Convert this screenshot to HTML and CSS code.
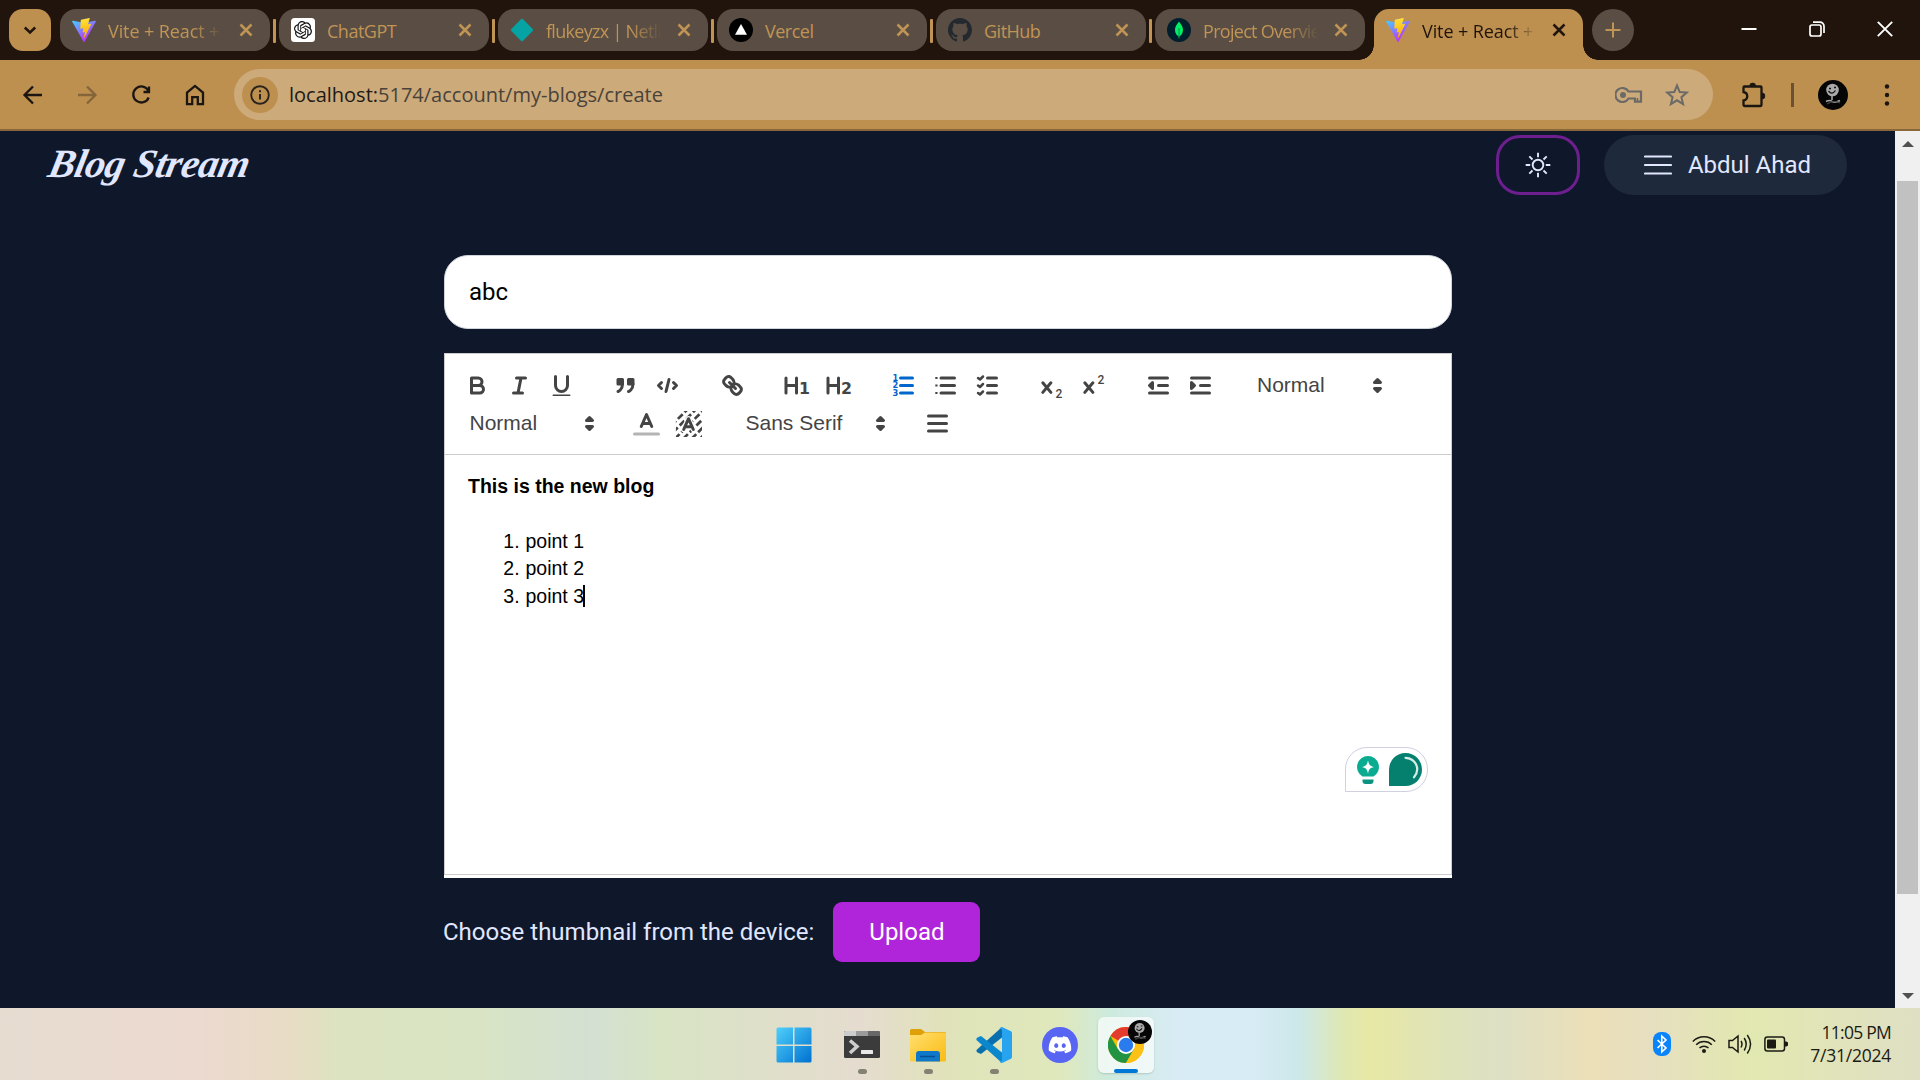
FILE: index.html
```
<!DOCTYPE html>
<html lang="en">
<head>
<meta charset="utf-8">
<title>Vite + React + TS</title>
<link rel="stylesheet" href="styles.css">
</head>
<body>
<svg class="defs" width="0" height="0" aria-hidden="true">
  <defs>
    <linearGradient id="viteA" x1="0" y1="0" x2="0.6" y2="0.9"><stop offset="0" stop-color="#41d1ff"/><stop offset="1" stop-color="#bd34fe"/></linearGradient>
    <linearGradient id="viteB" x1="0.4" y1="0" x2="0.5" y2="1"><stop offset="0" stop-color="#ffea83"/><stop offset="0.1" stop-color="#ffdd35"/><stop offset="1" stop-color="#ffa800"/></linearGradient>
    <linearGradient id="win" x1="0" y1="0" x2="1" y2="1"><stop offset="0" stop-color="#4fd0fb"/><stop offset="1" stop-color="#0070d0"/></linearGradient>
    <linearGradient id="folder" x1="0" y1="0" x2="1" y2="1"><stop offset="0" stop-color="#ffdf70"/><stop offset="1" stop-color="#fbbb12"/></linearGradient>
    <symbol id="vite" viewBox="0 0 256 257">
      <path fill="url(#viteA)" d="M255.153 37.938L134.897 252.976c-2.483 4.44-8.862 4.466-11.382.048L.875 37.958c-2.746-4.814 1.371-10.646 6.827-9.67l120.385 21.517a6.537 6.537 0 0 0 2.322-.004l117.867-21.483c5.438-.991 9.574 4.796 6.877 9.62Z"/>
      <path fill="url(#viteB)" d="M185.432.063L96.44 17.501a3.268 3.268 0 0 0-2.634 3.014l-5.474 92.456a3.268 3.268 0 0 0 3.997 3.378l24.777-5.718c2.318-.535 4.413 1.507 3.936 3.838l-7.361 36.047c-.495 2.426 1.782 4.5 4.151 3.78l15.304-4.649c2.372-.72 4.652 1.36 4.15 3.788l-11.698 56.621c-.732 3.542 3.979 5.473 5.943 2.437l1.313-2.028l72.516-144.72c1.215-2.423-.88-5.186-3.54-4.672l-25.505 4.922c-2.396.462-4.435-1.77-3.759-4.114l16.646-57.705c.677-2.35-1.37-4.583-3.769-4.113Z"/>
    </symbol>
    <symbol id="close" viewBox="0 0 24 24"><path d="M6.5 6.5l11 11M17.5 6.5l-11 11" fill="none" stroke="currentColor" stroke-width="2.5"/></symbol>
    <symbol id="avatar" viewBox="0 0 30 30">
      <circle cx="15" cy="15" r="15" fill="#050505"/>
      <circle cx="14.5" cy="10" r="6.3" fill="#a9a9a9"/>
      <path d="M11 8.5h2M16 7.5h2M10.5 11q3.5 4.5 7-.5" fill="none" stroke="#111" stroke-width="1.3"/>
      <path d="M14 16v4M8 21.500q4-2 6 0t8-1" fill="none" stroke="#a5a5a5" stroke-width="1.6"/>
      <path d="M9 24q6-4 13-1" fill="none" stroke="#444" stroke-width="1.3"/>
    </symbol>
    <symbol id="sort" viewBox="0 0 18 18"><path class="fs" d="M7 11l2 2 2-2zM7 7l2-2 2 2z"/></symbol>
  </defs>
</svg>

<header class="tabstrip">
  <button class="search-tabs"><svg width="16" height="16" viewBox="0 0 16 16"><path d="M2.8 5.5L8 10.5l5.2-5" fill="none" stroke="currentColor" stroke-width="2.5"/></svg></button>
  <div class="tab"><svg class="fav"><use href="#vite"/></svg><span class="tab-title fade wide">Vite + React + TS</span><svg class="x"><use href="#close"/></svg></div>
  <i class="sep"></i>
  <div class="tab"><svg class="fav" viewBox="0 0 24 24"><rect width="24" height="24" rx="3.5" fill="#fff"/><path transform="translate(3 3) scale(.75)" fill="#111" d="M22.2819 9.8211a5.9847 5.9847 0 0 0-.5157-4.9108 6.0462 6.0462 0 0 0-6.5098-2.9A6.0651 6.0651 0 0 0 4.9807 4.1818a5.9847 5.9847 0 0 0-3.9977 2.9 6.0462 6.0462 0 0 0 .7427 7.0966 5.98 5.98 0 0 0 .511 4.9107 6.051 6.051 0 0 0 6.5146 2.9001A5.9847 5.9847 0 0 0 13.2599 24a6.0557 6.0557 0 0 0 5.7718-4.2058 5.9894 5.9894 0 0 0 3.9977-2.9001 6.0557 6.0557 0 0 0-.7475-7.0729zm-9.022 12.6081a4.4755 4.4755 0 0 1-2.8764-1.0408l.1419-.0804 4.7783-2.7582a.7948.7948 0 0 0 .3927-.6813v-6.7369l2.02 1.1686a.071.071 0 0 1 .038.052v5.5826a4.504 4.504 0 0 1-4.4945 4.4944zm-9.6607-4.1254a4.4708 4.4708 0 0 1-.5346-3.0137l.142.0852 4.783 2.7582a.7712.7712 0 0 0 .7806 0l5.8428-3.3685v2.3324a.0804.0804 0 0 1-.0332.0615L9.74 19.9502a4.4992 4.4992 0 0 1-6.1408-1.6464zM2.3408 7.8956a4.485 4.485 0 0 1 2.3655-1.9728V11.6a.7664.7664 0 0 0 .3879.6765l5.8144 3.3543-2.0201 1.1685a.0757.0757 0 0 1-.071 0l-4.8303-2.7865A4.504 4.504 0 0 1 2.3408 7.872zm16.5963 3.8558L13.1038 8.364 15.1192 7.2a.0757.0757 0 0 1 .071 0l4.8303 2.7913a4.4944 4.4944 0 0 1-.6765 8.1042v-5.6772a.79.79 0 0 0-.407-.667zm2.0107-3.0231l-.142-.0852-4.7735-2.7818a.7759.7759 0 0 0-.7854 0L9.409 9.2297V6.8974a.0662.0662 0 0 1 .0284-.0615l4.8303-2.7866a4.4992 4.4992 0 0 1 6.6802 4.66zM8.3065 12.863l-2.02-1.1638a.0804.0804 0 0 1-.038-.0567V6.0742a4.4992 4.4992 0 0 1 7.3757-3.4537l-.142.0805L8.704 5.459a.7948.7948 0 0 0-.3927.6813zm1.0976-2.3654l2.602-1.4998 2.6069 1.4998v2.9994l-2.5974 1.4997-2.6067-1.4997Z"/></svg><span class="tab-title">ChatGPT</span><svg class="x"><use href="#close"/></svg></div>
  <i class="sep"></i>
  <div class="tab"><svg class="fav" viewBox="0 0 24 24"><rect x="3.7" y="3.7" width="16.6" height="16.6" rx="1.5" transform="rotate(45 12 12)" fill="#05a3a3"/></svg><span class="tab-title fade tight">flukeyzx | Netlify</span><svg class="x"><use href="#close"/></svg></div>
  <i class="sep"></i>
  <div class="tab"><svg class="fav" viewBox="0 0 24 24"><circle cx="12" cy="12" r="12"/><path d="M12 6l6 10.7H6z" fill="#fff"/></svg><span class="tab-title">Vercel</span><svg class="x"><use href="#close"/></svg></div>
  <i class="sep"></i>
  <div class="tab"><svg class="fav" viewBox="0 0 16 16"><path fill="#24292f" d="M8 0C3.58 0 0 3.58 0 8c0 3.54 2.29 6.53 5.47 7.59.4.07.55-.17.55-.38 0-.19-.01-.82-.01-1.49-2.01.37-2.53-.49-2.69-.94-.09-.23-.48-.94-.82-1.13-.28-.15-.68-.52-.01-.53.63-.01 1.08.58 1.23.82.72 1.21 1.87.87 2.33.66.07-.52.28-.87.51-1.07-1.78-.2-3.64-.89-3.64-3.95 0-.87.31-1.59.82-2.15-.08-.2-.36-1.02.08-2.12 0 0 .67-.21 2.2.82.64-.18 1.32-.27 2-.27s1.36.09 2 .27c1.53-1.04 2.2-.82 2.2-.82.44 1.1.16 1.92.08 2.12.51.56.82 1.27.82 2.15 0 3.07-1.87 3.75-3.65 3.95.29.25.54.73.54 1.48 0 1.07-.01 1.93-.01 2.2 0 .21.15.46.55.38A8.01 8.01 0 0 0 16 8c0-4.42-3.58-8-8-8z"/></svg><span class="tab-title">GitHub</span><svg class="x"><use href="#close"/></svg></div>
  <i class="sep"></i>
  <div class="tab"><svg class="fav" viewBox="0 0 24 24"><circle cx="12" cy="12" r="12" fill="#001e2b"/><path d="M12 3.5c.8 1.6 4 4 4 8.500 0 3.500-2 5.500-3.600 6.500l-.1 2h-.6l-.1-2C10 17.500 8 15.500 8 12c0-4.500 3.200-6.900 4-8.500z" fill="#00ed64"/><path d="M12 10v9" stroke="#00684a" stroke-width=".7"/></svg><span class="tab-title fade tight">Project Overview</span><svg class="x"><use href="#close"/></svg></div>
  <div class="tab active"><svg class="fav"><use href="#vite"/></svg><span class="tab-title fade wide">Vite + React + TS</span><svg class="x"><use href="#close"/></svg></div>
  <button class="new-tab"><svg width="16" height="16" viewBox="0 0 16 16"><path d="M8 .5v15M.5 8h15" stroke="currentColor" stroke-width="2"/></svg></button>
  <div class="win-controls">
    <svg width="16" height="16" viewBox="0 0 16 16"><path d="M.5 8h15" stroke-width="2"/></svg>
    <svg width="16" height="16" viewBox="0 0 16 16"><rect x="1" y="4" width="11" height="11" rx="2"/><path d="M4 1.200h7a4 4 0 0 1 4 4V12"/></svg>
    <svg width="16" height="16" viewBox="0 0 16 16"><path d="M.8.8l14.400 14.400M15.200.8L.8 15.200" stroke-width="1.900"/></svg>
  </div>
</header>

<nav class="toolbar">
  <div class="nav-buttons">
    <svg viewBox="0 0 24 24"><path d="M21 12H4M12 3.500L3.500 12l8.500 8.500"/></svg>
    <svg class="dim" viewBox="0 0 24 24"><path d="M3 12h17M12 3.500l8.500 8.500-8.500 8.500"/></svg>
    <svg viewBox="0 0 24 24"><path d="M19.500 8A8 8 0 1 0 19.700 14.500M20 3.500v5.500h-5.500"/></svg>
    <svg viewBox="0 0 24 24"><path d="M4 21.200V9.500l8-6.600 8 6.600v11.700h-5.200v-7H9.200v7z"/></svg>
  </div>
  <div class="omnibox">
    <span class="site-info"><svg width="20" height="20" viewBox="0 0 20 20"><circle cx="10" cy="10" r="8.800" fill="none" stroke="#2a241d" stroke-width="1.900"/><path d="M10 9v5.500M10 5.300v2" stroke="#2a241d" stroke-width="2"/></svg></span>
    <span class="url"><b>localhost:</b>5174/account/my-blogs/create</span>
    <svg class="key" width="28" height="18" viewBox="0 0 28 18"><path d="M13.500 5.500A7 7 0 1 0 13.500 12.500H20v3.200h6V5.500z" fill="none" stroke="#6b6a67" stroke-width="2.200"/><circle cx="8" cy="9" r="3" fill="#6b6a67"/><path d="M22.500 15v-3" stroke="#6b6a67" stroke-width="1.500"/></svg>
    <svg class="star" width="24" height="24" viewBox="0 0 24 24"><path d="M12 2.500l2.700 6.600 7.100.5-5.400 4.600 1.700 6.900-6.100-3.800-6.100 3.800 1.700-6.900-5.400-4.600 7.100-.5z" fill="none" stroke="#6b6a67" stroke-width="2"/></svg>
  </div>
  <svg class="ext" width="26" height="26" viewBox="0 0 26 26"><path d="M4.500 4.500h16a1 1 0 0 1 1 1V23a1 1 0 0 1-1 1h-16a1 1 0 0 1-1-1v-4.500c5-1 5-7.500 0-8.500V5.500a1 1 0 0 1 1-1z" fill="none" stroke="#1b1611" stroke-width="2.300"/><path d="M9.500 4a3.200 3.200 0 0 1 6.400 0zM22 10.800a3.200 3.200 0 0 1 0 6.400z" fill="#1b1611"/></svg>
  <i class="tb-divider"></i>
  <svg class="profile" width="30" height="30"><use href="#avatar"/></svg>
  <svg class="kebab" width="6" height="24" viewBox="0 0 6 24"><circle cx="3" cy="3.500" r="2.200"/><circle cx="3" cy="12" r="2.200"/><circle cx="3" cy="20.500" r="2.200"/></svg>
</nav>

<div class="viewport">
  <main class="page">
    <div class="site-head">
      <a class="logo">Blog Stream</a>
      <div class="head-actions">
        <button class="theme"><svg width="26" height="26" viewBox="0 0 26 26"><circle cx="13" cy="13" r="5.300"/><path d="M13 .7v4.500M13 20.800v4.500M.7 13h4.500M20.800 13h4.500M4.300 4.300l3.200 3.200M18.500 18.500l3.200 3.200M4.300 21.700l3.200-3.200M18.500 7.500l3.200-3.200"/></svg></button>
        <button class="user"><svg width="28" height="20" viewBox="0 0 28 20"><path d="M1 1.500h26M1 10h26M1 18.500h26" stroke="#e0e7ff" stroke-width="2.200" stroke-linecap="round"/></svg><span>Abdul Ahad</span></button>
      </div>
    </div>

    <form class="form">
      <div class="title-input">abc</div>
      <div class="editor">
        <div class="ql-toolbar">
          <span class="grp">
            <svg viewBox="0 0 18 18"><path d="M5,4H9.500A2.500,2.500,0,0,1,9.500,9H5ZM5,9h5.500a2.500,2.500,0,0,1,0,5H5Z"/></svg>
            <svg viewBox="0 0 18 18"><path d="M7 4h6M5 14h6M8 14L10 4"/></svg>
            <svg viewBox="0 0 18 18"><path d="M5,3V9a4,4,0,0,0,8,0V3"/><rect class="f" x="3" y="15" width="12" height="1" rx=".5"/></svg>
          </span>
          <span class="grp">
            <svg viewBox="0 0 18 18"><path class="fs" d="M4 5h3v3H4zM11 5h3v3h-3z"/><path d="M7,8c0,4.031-3,5-3,5M14,8c0,4.031-3,5-3,5"/></svg>
            <svg viewBox="0 0 18 18"><path d="M5 7L3 9l2 2M13 7l2 2-2 2M10 5L8 13"/></svg>
          </span>
          <span class="grp">
            <svg viewBox="0 0 18 18"><path d="M7 7l4 4M8.900,4.577a3.476,3.476,0,0,1,.36,4.679A3.476,3.476,0,0,1,4.577,8.900C3.185,7.500,2.035,6.400,4.217,4.217S7.500,3.185,8.900,4.577ZM13.423,9.100a3.476,3.476,0,0,0-4.679-.36,3.476,3.476,0,0,0,.36,4.679c1.392,1.392,2.500,2.542,4.679.36S14.815,10.500,13.423,9.100Z"/></svg>
          </span>
          <span class="grp">
            <svg viewBox="0 0 18 18"><path d="M2 4v10M9 4v10M2 9h7"/><text x="10.600" y="14.900" font-size="10.500">1</text></svg>
            <svg viewBox="0 0 18 18"><path d="M2 4v10M9 4v10M2 9h7"/><text x="10.700" y="14.900" font-size="10.500">2</text></svg>
          </span>
          <span class="grp">
            <svg class="on" viewBox="0 0 18 18"><path d="M7 4h8M7 9h8M7 14h8"/><text x="1.600" y="5.700" font-size="5.500">1</text><text x="1.600" y="10.900" font-size="5.500">2</text><text x="1.600" y="16" font-size="5.500">3</text></svg>
            <svg viewBox="0 0 18 18"><path d="M6 4h9M6 9h9M6 14h9"/><path class="f" d="M2.200 3.300h1.500v1.400H2.200zM2.200 8.300h1.500v1.400H2.200zM2.200 13.300h1.500v1.400H2.200z"/></svg>
            <svg viewBox="0 0 18 18"><path d="M9 4h6M9 9h6M9 14h6"/><path class="thin" d="M2.700 4l1.300 1L6 3M2.700 9l1.300 1L6 8M2.700 14l1.300 1L6 13"/></svg>
          </span>
          <span class="grp">
            <svg viewBox="0 0 18 18"><path d="M3.200 7.200l5.400 6.400M8.600 7.200L3.200 13.600"/><text class="reg" x="11.600" y="17" font-size="8">2</text></svg>
            <svg viewBox="0 0 18 18"><path d="M3.200 7.200l5.400 6.400M8.600 7.200L3.200 13.600"/><text class="reg" x="11.600" y="8.300" font-size="8">2</text></svg>
          </span>
          <span class="grp">
            <svg viewBox="0 0 18 18"><path d="M3 4h12M3 14h12M9 9h6"/><path class="fs" d="M5 7v4L3 9z"/></svg>
            <svg viewBox="0 0 18 18"><path d="M3 4h12M3 14h12M9 9h6"/><path class="fs" d="M3 7v4l2-2z"/></svg>
          </span>
          <span class="picker"><span>Normal</span><svg><use href="#sort"/></svg></span>
          <span class="picker"><span>Normal</span><svg><use href="#sort"/></svg></span>
          <span class="grp">
            <svg viewBox="0 0 18 18"><path opacity=".4" d="M1 16h16"/><path d="M5.500 11L9 3l3.500 8M11.600 9H6.400"/></svg>
            <svg class="hatched" viewBox="0 0 18 18"><svg x="2" y="2" width="14.500" height="14.500" viewBox="2 2 14.500 14.500" transform="translate(-1.800 -1.800) scale(1.200)"><path class="hatch" d="M6 1L1 6M8.500 1L1 8.500M11 1L1 11M13.500 1L1 13.500M16 1L1 16M18 1.500L1.500 18M18 4L4 18M18 6.500L6.500 18M18 9L9 18M18 11.500L11.500 18M18 14L14 18"/></svg><path class="halo" d="M5.800 13L9 5.800l3.200 7.200M11.400 11.200H6.600"/><path d="M5.800 13L9 5.800l3.200 7.200M11.400 11.200H6.600"/></svg>
          </span>
          <span class="picker font"><span>Sans Serif</span><svg><use href="#sort"/></svg></span>
          <span class="grp"><svg viewBox="0 0 18 18"><path d="M3 4h12M3 9h12M3 14h12"/></svg></span>
        </div>
        <div class="ql-body">
          <p><strong>This is the new blog</strong></p>
          <p><br></p>
          <ol><li>point 1</li><li>point 2</li><li>point 3<i class="caret"></i></li></ol>
          <div class="assist">
            <svg width="24" height="30" viewBox="0 0 24 30"><path d="M12 1a11 11 0 0 1 5.500 20.500H6.500A11 11 0 0 1 12 1z" fill="#0bab92"/><path d="M12 5.500c1 4.500 1.900 5.400 6 6.500-4.100 1-5 2-6 6.500-1-4.500-1.900-5.500-6-6.500 4.100-1.100 5-2 6-6.500z" fill="#fff"/><path d="M6.500 24.500h11V26a3 3 0 0 1-3 3h-5a3 3 0 0 1-3-3z" fill="#0a9480"/></svg>
            <svg width="33" height="33" viewBox="0 0 33 33"><path d="M0 33V16.500A16.500 16.500 0 1 1 16.500 33z" fill="#05806f"/><path d="M16.500 4.800c10 .5 15.500 11 8.500 19.500" fill="none" stroke="#d5ece8" stroke-width="2.200" stroke-linecap="round"/></svg>
          </div>
        </div>
      </div>
      <div class="upload-row"><span>Choose thumbnail from the device:</span><button class="upload">Upload</button></div>
    </form>
  </main>
  <aside class="scrollbar">
    <svg width="12" height="6" viewBox="0 0 12 6"><path d="M0 6l6-6 6 6z"/></svg>
    <div class="track"><div class="thumb"></div></div>
    <svg width="12" height="6" viewBox="0 0 12 6"><path d="M0 0l6 6 6-6z"/></svg>
  </aside>
</div>

<footer class="taskbar">
  <div class="apps">
    <div class="app start"><svg width="36" height="36" viewBox="0 0 36 36"><path fill="url(#win)" d="M2 .5h15v17H.5V2A1.500 1.500 0 0 1 2 .5zM18.500 .5H34A1.500 1.500 0 0 1 35.500 2v15.500h-17zM.5 19h16.500v16.500H2A1.500 1.500 0 0 1 .5 34zM18.500 19h17v15a1.500 1.500 0 0 1-1.500 1.500H18.500z"/></svg></div>
    <div class="app run"><svg width="36" height="36" viewBox="0 0 36 36"><rect y="4" width="36" height="27" rx="1.500" fill="#3b3b3b"/><path d="M1.500 4H12v5H0V5.500A1.500 1.500 0 0 1 1.500 4z" fill="#ccc"/><path d="M12 4h12v5H12z" fill="#9a9a9a"/><path d="M24 4h10.500A1.500 1.500 0 0 1 36 5.500V9H24z" fill="#686868"/><path d="M6 13.500l7 6-7 6.500" fill="none" stroke="#cfcfcf" stroke-width="3.500"/><rect x="17" y="23" width="12" height="4" rx=".6" fill="#e9e9e9"/></svg></div>
    <div class="app run"><svg width="36" height="36" viewBox="0 0 36 36"><path d="M1.500 2H11l4 3h20a1 1 0 0 1 1 1v6H0V3.500A1.500 1.500 0 0 1 1.500 2z" fill="#dea10a"/><path d="M0 8h11l4-2.500h21V33a1.500 1.500 0 0 1-1.500 1.500h-33A1.500 1.500 0 0 1 0 33z" fill="url(#folder)"/><path d="M6 34.500V27a3 3 0 0 1 3-3h18a3 3 0 0 1 3 3v7.500z" fill="#0f78c8"/><path d="M10 29.500h15" stroke="#084f91" stroke-width="1.500"/></svg></div>
    <div class="app run"><svg width="36" height="36" viewBox="0 0 36 36"><path d="M26 0v10.500L5 27 1.500 25.500Q-.5 24 1 22.500z" fill="#0a70ad"/><path d="M26 36V25.500L5 9 1.500 10.500Q-.5 12 1 13.500z" fill="#0b87cd"/><path d="M26 0l9 4.200q1 .5 1 2v23.600q0 1.500-1 2L26 36q-1.500 0-2.500-1.500Q26 35 26 32V4q0-3-2.500-2.500Q24.500 0 26 0z" fill="#27a3f0"/></svg></div>
    <div class="app"><svg width="36" height="36" viewBox="0 0 36 36"><circle cx="18" cy="18" r="18" fill="#5865f2"/><path transform="translate(6.700 6.500) scale(.94)" fill="#fff" d="M20.317 4.3698a19.7913 19.7913 0 00-4.8851-1.5152.0741.0741 0 00-.0785.0371c-.211.3753-.4447.8648-.6083 1.2495-1.8447-.2762-3.68-.2762-5.4868 0-.1636-.3933-.4058-.8742-.6177-1.2495a.077.077 0 00-.0785-.037 19.7363 19.7363 0 00-4.8852 1.515.0699.0699 0 00-.0321.0277C.5334 9.0458-.319 13.5799.0992 18.0578a.0824.0824 0 00.0312.0561c2.0528 1.5076 4.0413 2.4228 5.9929 3.0294a.0777.0777 0 00.0842-.0276c.4616-.6304.8731-1.2952 1.226-1.9942a.076.076 0 00-.0416-.1057c-.6528-.2476-1.2743-.5495-1.8722-.8923a.077.077 0 01-.0076-.1277c.1258-.0943.2517-.1923.3718-.2914a.0743.0743 0 01.0776-.0105c3.9278 1.7933 8.180 1.7933 12.0614 0a.0739.0739 0 01.0785.0095c.1202.099.246.1981.3728.2924a.077.077 0 01-.0066.1276 12.2986 12.2986 0 01-1.873.8914.0766.0766 0 00-.0407.1067c.3604.698.7719 1.3628 1.225 1.9932a.076.076 0 00.0842.0286c1.961-.6067 3.9495-1.5219 6.0023-3.0294a.077.077 0 00.0313-.0552c.5004-5.177-.8382-9.6739-3.5485-13.6604a.061.061 0 00-.0312-.0286zM8.020 15.3312c-1.1825 0-2.1569-1.0857-2.1569-2.419 0-1.3332.9555-2.4189 2.157-2.4189 1.2108 0 2.1757 1.0952 2.1568 2.419 0 1.3332-.9555 2.4189-2.1569 2.4189zm7.9748 0c-1.1825 0-2.1569-1.0857-2.1569-2.419 0-1.3332.9554-2.4189 2.1569-2.4189 1.2108 0 2.1757 1.0952 2.1568 2.419 0 1.3332-.946 2.4189-2.1568 2.4189Z"/></svg></div>
    <div class="app current"><div class="tile"><svg width="36" height="36" viewBox="0 0 36 36"><circle cx="18" cy="18" r="18" fill="#fbbc04"/><path d="M18 18L2.410 9A18 18 0 0 1 33.590 9z" fill="#e33b2e"/><path d="M2.410 9A18 18 0 0 0 18 36l7.800-13.500L18 18l-7.800 4.500z" fill="#229342"/><path d="M18 9h15.590A18 18 0 0 1 18 36l7.800-13.500z" fill="#fbc116"/><circle cx="18" cy="18" r="9" fill="#fff"/><circle cx="18" cy="18" r="7.200" fill="#2a7bee"/></svg><svg class="badge" width="24" height="24"><use href="#avatar"/></svg></div></div>
  </div>
  <div class="tray">
    <svg width="18" height="24" viewBox="0 0 18 24"><rect width="18" height="24" rx="8" fill="#0a84fb"/><path d="M4.500 8l8.500 8-4.200 4V4L13 8l-8.500 8" fill="none" stroke="#fff" stroke-width="1.600"/></svg>
    <svg class="wifi" width="24" height="24" viewBox="0 0 24 24"><path d="M.8 9.500a15.500 15.500 0 0 1 22.400 0M4.200 12.800a11 11 0 0 1 15.600 0M7.500 16a6.400 6.400 0 0 1 9 0" fill="none" stroke="#1b1b14" stroke-width="1.500"/><circle cx="12" cy="19" r="2"/></svg>
    <svg width="24" height="24" viewBox="0 0 24 24"><path d="M1 8.500h3.500L10 4v16l-5.500-4.500H1zM13 9q2 3 0 6.500M16.200 6q4 6 0 12.500M19.300 3q6.500 9 0 18.500" fill="none" stroke="#1b1b14" stroke-width="1.500"/></svg>
    <svg width="24" height="24" viewBox="0 0 24 24"><rect x=".9" y="5" width="19.600" height="14" rx="2.500" fill="none" stroke="#1b1b14" stroke-width="1.500"/><rect x="3" y="7.500" width="9" height="9" rx="1"/><path d="M21 9.500h1.500l1.500 1v3l-1.500 1H21z"/></svg>
    <div class="clock"><span>11:05 PM</span><span class="date">7/31/2024</span></div>
  </div>
</footer>
</body>
</html>
```

FILE: styles.css
```
* { box-sizing: border-box; }
body {
  margin: 0; width: 1920px; height: 1080px; overflow: hidden;
  display: flex; flex-direction: column;
  font-family: "Open Sans", "Noto Sans", sans-serif;
}
button { border: 0; padding: 0; font: inherit; display: flex; align-items: center; justify-content: center; }
svg { display: block; flex: none; }
.defs { position: absolute; }

/* browser tab strip */
.tabstrip { height: 60px; flex: none; background: #20140c; display: flex; align-items: flex-start; padding: 9px 0 0 9px; }
.search-tabs { width: 42px; height: 42px; border-radius: 14px; background: #bd9050; color: #20140c; margin-right: 9px; }
.tab { width: 210px; height: 42px; border-radius: 16px; background: #5a4e44; color: #c09455; display: flex; align-items: center; padding: 0 12px; }
.fav { width: 24px; height: 24px; margin-right: 12px; }
.tab-title { width: 114px; font-size: 18px; line-height: 24px; letter-spacing: -0.5px; white-space: nowrap; overflow: hidden; padding-top: 1px; }
.tab-title.wide { letter-spacing: -0.1px; }
.tab-title.tight { letter-spacing: -0.7px; }
.fade { -webkit-mask-image: linear-gradient(90deg, #000 84px, transparent 116px); mask-image: linear-gradient(90deg, #000 84px, transparent 116px); }
.x { width: 24px; height: 24px; margin-left: 12px; }
.sep { width: 3px; height: 24px; margin: 10px 3px 0; background: #c09455; border-radius: 1px; }
.tab.active { position: relative; margin-left: 9px; width: 209px; height: 51px; padding-bottom: 9px; border-radius: 15px 15px 0 0; background: #bd9050; color: #20140c; }
.tab.active .x { margin-left: 11px; }
.tab.active::before, .tab.active::after { content: ""; position: absolute; bottom: 0; width: 15px; height: 15px; }
.tab.active::before { left: -15px; background: radial-gradient(circle at 0 0, transparent 14.5px, #bd9050 15px); }
.tab.active::after { right: -15px; background: radial-gradient(circle at 100% 0, transparent 14.5px, #bd9050 15px); }
.new-tab { width: 42px; height: 42px; border-radius: 50%; background: #5a4e44; color: #c09455; margin-left: 9px; }
.win-controls { display: flex; gap: 52px; margin: 12px 27px 0 auto; }
.win-controls svg { fill: none; stroke: #fff; stroke-width: 1.7; }

/* address bar */
.toolbar { height: 71px; flex: none; background: #bd9050; border-bottom: 2px solid #88673a; display: flex; align-items: center; padding: 0 30px 0 6px; }
.nav-buttons { display: flex; width: 228px; color: #1b1611; }
.nav-buttons svg { width: 24px; height: 24px; margin: 0 15px; fill: none; stroke: currentColor; stroke-width: 2.3; }
.nav-buttons .dim { color: #846539; }
.omnibox { width: 1479px; height: 51px; border-radius: 26px; background: #ccaa7a; display: flex; align-items: center; padding: 0 24px 0 8px; }
.site-info { width: 36px; height: 36px; border-radius: 50%; background: #bd9050; display: flex; align-items: center; justify-content: center; }
.url { margin-left: 11px; font-size: 20px; color: #49423a; flex: 1; }
.url b { font-weight: 400; color: #201a16; }
.key { margin-right: 22px; }
.ext { margin-left: 27px; }
.tb-divider { width: 3px; height: 24px; background: #6b5134; margin-left: 25px; }
.profile { margin-left: 24px; }
.kebab { margin-left: auto; fill: #1b1611; }

/* page */
.viewport { flex: 1; display: flex; min-height: 0; }
.page { flex: 1; background: #0f172a; color: #e0e7ff; font-family: Roboto, sans-serif; font-size: 24px; }
.site-head { display: flex; justify-content: space-between; height: 64px; padding: 4px 48px 0 49px; }
.logo { font: italic 700 40px/58px "Liberation Serif", serif; transform: skewX(-12deg); letter-spacing: -0.5px; color: #e0e7ff; }
.head-actions { display: flex; gap: 24px; height: 60px; }
.theme { width: 84px; border: 3px solid #6d1f8f; border-radius: 24px; background: transparent; }
.theme svg { fill: none; stroke: #e0e7ff; stroke-width: 1.9; }
.user { width: 243px; border-radius: 30px; background: #1e293b; color: #e0e7ff; gap: 16px; padding-left: 4px; }
.form { width: 1008px; margin: 60px 0 0 444px; }
.title-input { height: 74px; border: 1px solid #d1d5db; border-radius: 24px; background: #fff; color: #000; padding: 0 24px; line-height: 72px; }
.editor { margin-top: 24px; height: 525px; background: #fff; font-family: "Liberation Sans", Arial, sans-serif; }
.ql-toolbar { height: 102px; border: 1px solid #ccc; padding: 13px 12px 0 11px; display: flex; flex-wrap: wrap; align-content: flex-start; gap: 2px 22.5px; }
.grp { display: flex; }
.grp svg { width: 27px; height: 27px; margin: 4.5px 7.5px; }
.ql-toolbar svg { fill: none; stroke: #444; stroke-width: 2; stroke-linecap: round; stroke-linejoin: round; }
.ql-toolbar .on { stroke: #06c; }
.ql-toolbar text { stroke: none; fill: #444; font-family: "DejaVu Sans", sans-serif; font-weight: 700; }
.ql-toolbar .on text { fill: #06c; }
.ql-toolbar text.reg { font-family: Roboto, sans-serif; font-weight: 500; }
.ql-toolbar .f { fill: #444; stroke: none; }
.fs { fill: #444; }
.thin { stroke-width: 1.7; }
.hatched .hatch { stroke-width: .8; stroke-linecap: butt; stroke-dasharray: 2 .8; }
.hatched .halo { stroke: #fff; stroke-width: 3.6; }
.picker { width: 147px; height: 36px; padding-left: 13.5px; display: flex; justify-content: space-between; align-items: center; font-size: 21px; color: #444; }
.picker.font { width: 162px; }
.picker svg { width: 27px; height: 27px; }
.ql-body { position: relative; height: 420px; border: 1px solid #ccc; border-top: 0; padding: 17.5px 23px; color: #000; font-size: 19.5px; line-height: 27.5px; }
.ql-body p { margin: 0; }
.ql-body ol { margin: 0; padding: 0 0 0 28.25px; list-style: none; counter-reset: pt; }
.ql-body li { display: flex; counter-increment: pt; }
.ql-body li::before { content: counter(pt) "."; width: 23.4px; margin-right: 5.85px; text-align: right; }
.caret { width: 2px; height: 22px; margin: 2px 0 0 -1px; background: #000; }
.assist { position: absolute; right: 23px; bottom: 82px; width: 83px; height: 45px; border: 1.5px solid #cfd0e0; border-radius: 22px 22px 22px 0; display: flex; align-items: center; gap: 9px; padding-left: 10px; }
.upload-row { display: flex; align-items: center; margin-top: 24px; gap: 19px; margin-left: -1px; }
.upload { width: 147px; height: 60px; border-radius: 9px; background: #b024da; color: #fff; }
.scrollbar { width: 25px; background: #f0f0f0; display: flex; flex-direction: column; align-items: center; padding: 10px 0 9px; fill: #505050; }
.track { flex: 1; width: 21px; padding-top: 34px; }
.thumb { height: 713px; background: #c1c1c1; }

/* taskbar */
.taskbar {
  height: 72px; flex: none; display: flex; justify-content: space-between; padding-left: 761px;
  background: linear-gradient(90deg, #e6dcd0 0, #ecd9cf 200px, #e8dcc5 290px, #dce3c0 340px, #d8e4c4 480px, #d3e0d2 590px, #d8e4c4 660px, #dde0c8 740px, #e5dccf 860px, #e0e3b9 950px, #dfe8bc 1060px, #cdeade 1110px, #d9ecf6 1180px, #d8ecf6 1250px, #cce8e8 1300px, #e0e8b0 1345px, #e7e8a4 1370px, #dfe3b8 1440px, #dde0c4 1500px, #ecdfb8 1590px, #e6dfc0 1650px, #e2e8b0 1750px, #dfdfc4 1920px);
}
.apps { display: flex; }
.app { width: 66px; display: flex; flex-direction: column; align-items: center; padding-top: 19px; }
.app.start { margin-right: 2px; }
.app.run::after { content: ""; width: 9px; height: 5px; border-radius: 3px; background: #838273; margin-top: 6px; }
.app.current { padding-top: 9px; }
.tile { position: relative; width: 56px; height: 56px; border-radius: 6px; background: rgba(255,255,255,.65); box-shadow: 0 1px 2px rgba(0,0,0,.15); display: flex; flex-direction: column; align-items: center; padding-top: 10px; }
.tile::after { content: ""; width: 24px; height: 5px; border-radius: 3px; background: #0078d7; margin-top: 6px; }
.badge { position: absolute; right: 2px; top: 3px; }
.tray { display: flex; padding: 0 29px 0 0; color: #1b1b14; fill: #1b1b14; }
.tray svg { margin: 24px 12px 0 0; }
.tray svg:first-child { margin-right: 21px; }
.clock { margin: 13px 0 0 11px; width: 80px; display: flex; flex-direction: column; align-items: flex-end; font-size: 17.5px; line-height: 23px; letter-spacing: -0.75px; white-space: nowrap; }
.date { letter-spacing: -0.25px; }
```
